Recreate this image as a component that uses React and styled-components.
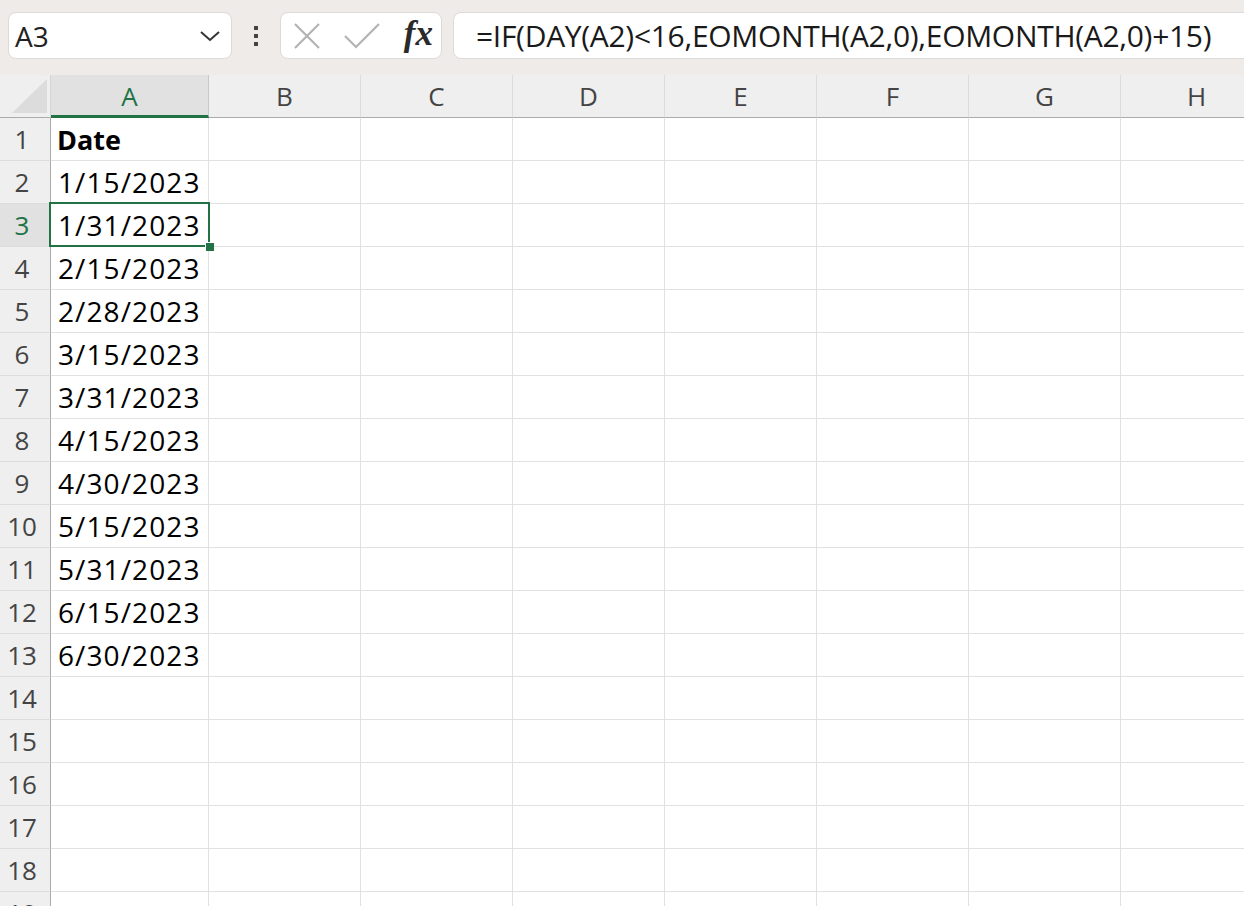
import React from "react";
import styled, { createGlobalStyle } from "styled-components";

const GlobalStyle = createGlobalStyle`
  html, body {
    margin: 0;
    padding: 0;
    background: #fff;
    overflow: hidden;
  }
  * { box-sizing: border-box; }
`;

const COLS = ["A", "B", "C", "D", "E", "F", "G", "H"];
const DATA = [
  "Date",
  "1/15/2023",
  "1/31/2023",
  "2/15/2023",
  "2/28/2023",
  "3/15/2023",
  "3/31/2023",
  "4/15/2023",
  "4/30/2023",
  "5/15/2023",
  "5/31/2023",
  "6/15/2023",
  "6/30/2023",
];
const ROW_COUNT = 19;
const SELECTED_ROW = 3;

const Page = styled.div`
  width: 1244px;
  height: 906px;
  overflow: hidden;
  font-family: "Open Sans", "Noto Sans", sans-serif;
`;

const Toolbar = styled.div`
  height: 75px;
  background: #eeebe9;
  display: flex;
  align-items: center;
  padding: 0 0 4px 8px;
`;

const Box = styled.div`
  height: 47px;
  background: #fff;
  border: 1px solid #dddad8;
  border-radius: 8px;
  display: flex;
  align-items: center;
  flex-shrink: 0;
`;

const NameBox = styled(Box)`
  width: 224px;
  padding: 0 10px 0 6px;
  justify-content: space-between;
  font-size: 28px;
  color: #222;
`;

const Dots = styled.div`
  width: 48px;
  display: flex;
  flex-direction: column;
  align-items: center;
  gap: 4px;
  span {
    width: 4px;
    height: 4px;
    background: #444;
  }
`;

const FxBox = styled(Box)`
  width: 162px;
  padding: 0 8px 0 12px;
  justify-content: space-between;
`;

const Fx = styled.span`
  font-family: "Liberation Serif", "DejaVu Serif", serif;
  font-style: italic;
  font-weight: 700;
  font-size: 35px;
  color: #2a2a2a;
  letter-spacing: 0px;
  margin-top: -4px;
`;

const FormulaBox = styled(Box)`
  flex: 1;
  margin-left: 11px;
  margin-right: -20px;
  padding-left: 22px;
  font-size: 30px;
  color: #1a1a1a;
  letter-spacing: -0.3px;
  white-space: nowrap;
`;

const Grid = styled.div`
  display: grid;
  grid-template-columns: 51px 158px repeat(7, 152px);
  grid-auto-rows: 43px;
`;

const Corner = styled.div`
  position: relative;
  background: #efefef;
  border-right: 1px solid #d5d5d5;
  border-bottom: 1px solid #ababab;
  svg {
    position: absolute;
    right: 3px;
    bottom: 4px;
  }
`;

const ColHead = styled.div`
  background: ${({ $active }) => ($active ? "#e1e1e1" : "#efefef")};
  color: ${({ $active }) => ($active ? "#217346" : "#444")};
  border-right: 1px solid ${({ $active }) => ($active ? "#c8c8c8" : "#dcdcdc")};
  border-bottom: ${({ $active }) => ($active ? "3px solid #217346" : "1px solid #ababab")};
  display: flex;
  align-items: center;
  justify-content: center;
  font-size: 26px;
  padding-top: ${({ $active }) => ($active ? "2px" : "0")};
`;

const RowHead = styled.div`
  background: ${({ $active }) => ($active ? "#e1e1e1" : "#efefef")};
  color: ${({ $active }) => ($active ? "#217346" : "#444")};
  border-right: 1px solid #ababab;
  border-bottom: 1px solid #dcdcdc;
  display: flex;
  align-items: center;
  justify-content: center;
  font-size: 26px;
  padding-right: 6px;
`;

const Cell = styled.div`
  position: relative;
  background: #fff;
  border-right: 1px solid #e1e1e1;
  border-bottom: 1px solid #e1e1e1;
  display: flex;
  align-items: center;
  padding-left: ${({ $bold }) => ($bold ? "6px" : "7px")};
  font-family: "Open Sans", "Noto Sans", sans-serif;
  font-size: ${({ $bold }) => ($bold ? "27px" : "28px")};
  letter-spacing: ${({ $bold }) => ($bold ? "0" : "1.1px")};
  font-weight: ${({ $bold }) => ($bold ? 700 : 400)};
  color: #000;
  white-space: nowrap;
`;

const Selection = styled.div`
  position: absolute;
  z-index: 2;
  top: -2px;
  left: -2px;
  right: -2px;
  bottom: -1px;
  border: 2px solid #217346;
  pointer-events: none;
  &::after {
    content: "";
    position: absolute;
    right: -6px;
    bottom: -6px;
    width: 8px;
    height: 8px;
    background: #217346;
    border-left: 1px solid #fff;
    border-top: 1px solid #fff;
  }
`;

const Chevron = () => (
  <svg width="22" height="14" viewBox="0 0 22 14">
    <path d="M2 3 L11 11 L20 3" fill="none" stroke="#333" strokeWidth="2" />
  </svg>
);

const Cross = () => (
  <svg width="28" height="28" viewBox="0 0 28 28">
    <path d="M2 2 L26 26 M26 2 L2 26" stroke="#b3b3b3" strokeWidth="2.2" fill="none" />
  </svg>
);

const Check = () => (
  <svg width="38" height="28" viewBox="0 0 38 28">
    <path d="M2 14 L13 25 L36 2" stroke="#b3b3b3" strokeWidth="2.2" fill="none" />
  </svg>
);

export default function App() {
  const rows = Array.from({ length: ROW_COUNT }, (_, i) => i + 1);
  return (
    <Page>
      <GlobalStyle />
      <Toolbar>
        <NameBox>
          <span>A3</span>
          <Chevron />
        </NameBox>
        <Dots>
          <span />
          <span />
          <span />
        </Dots>
        <FxBox>
          <Cross />
          <Check />
          <Fx>fx</Fx>
        </FxBox>
        <FormulaBox>=IF(DAY(A2)&lt;16,EOMONTH(A2,0),EOMONTH(A2,0)+15)</FormulaBox>
      </Toolbar>
      <Grid>
        <Corner>
          <svg width="35" height="34" viewBox="0 0 35 34">
            <path d="M35 0 L35 34 L0 34 Z" fill="#dcdcdc" />
          </svg>
        </Corner>
        {COLS.map((c) => (
          <ColHead key={c} $active={c === "A"}>
            {c}
          </ColHead>
        ))}
        {rows.map((r) => (
          <React.Fragment key={r}>
            <RowHead $active={r === SELECTED_ROW}>{r}</RowHead>
            {COLS.map((c) => (
              <Cell key={c} $bold={c === "A" && r === 1}>
                {c === "A" ? DATA[r - 1] : null}
                {c === "A" && r === SELECTED_ROW && <Selection />}
              </Cell>
            ))}
          </React.Fragment>
        ))}
      </Grid>
    </Page>
  );
}
